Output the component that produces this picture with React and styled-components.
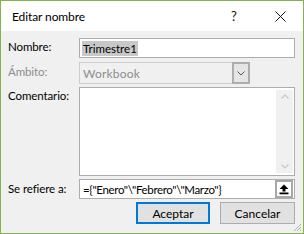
import React from "react";
import styled, { createGlobalStyle } from "styled-components";

const Global = createGlobalStyle`
  html, body { margin: 0; padding: 0; background: #fff; }
  body { font-family: "Lato", "Segoe UI", sans-serif; font-size: 11.5px; color: #000; }
`;

const Window = styled.div`
  box-sizing: border-box;
  width: 304px;
  height: 234px;
  border: 1px solid #7fb54a;
  background: #f0f0f0;
  display: flex;
  flex-direction: column;
  position: relative;
  overflow: hidden;
`;

const TitleBar = styled.div`
  height: 30px;
  background: #fff;
  display: flex;
  align-items: center;
  padding-left: 11px;
  flex-shrink: 0;
`;

const Title = styled.div`
  flex: 1;
  font-size: 12px;
  letter-spacing: -0.1px;
`;

const TitleButton = styled.div`
  width: 46px;
  height: 30px;
  display: flex;
  align-items: center;
  justify-content: center;
  font-size: 13px;
  color: #111;
`;

const Body = styled.div`
  flex: 1;
  display: grid;
  grid-template-columns: 71px 216px;
  grid-template-rows: 21px 22px 89px 20px 22px;
  row-gap: 3px;
  padding: 7px 0 0 7px;
  align-items: start;
`;

const Label = styled.div`
  font-size: 11.5px;
  line-height: 16px;
  letter-spacing: -0.1px;
  padding-top: ${(p) => p.$top || 1}px;
  color: ${(p) => (p.$disabled ? "#8d8d8d" : "#000")};
`;

const TextBox = styled.div`
  box-sizing: border-box;
  height: 20px;
  border: 1px solid #adadad;
  background: #fff;
  display: flex;
  align-items: center;
  padding: 0 2px;
  font-size: 11.5px;
`;

const Selected = styled.span`
  background: #c8c8c8;
  line-height: 15px;
  padding: 0 1px;
`;

const Combo = styled.div`
  box-sizing: border-box;
  width: 171px;
  height: 22px;
  border: 1px solid #cccccc;
  background: #f0f0f0;
  display: flex;
  align-items: stretch;
`;

const ComboText = styled.div`
  flex: 1;
  display: flex;
  align-items: center;
  padding-left: 3px;
  color: #8d8d8d;
  font-size: 12px;
  letter-spacing: 0.2px;
`;

const ComboButton = styled.div`
  box-sizing: border-box;
  width: 18px;
  margin: -1px -1px -1px 0;
  border: 2px solid #adadad;
  background: #e5e5e5;
  display: flex;
  align-items: center;
  justify-content: center;
`;

const TextArea = styled.div`
  box-sizing: border-box;
  height: 89px;
  border: 1px solid #adadad;
  background: #fff;
  display: flex;
  justify-content: flex-end;
  padding: 2px 1px 2px 0;
`;

const ScrollBar = styled.div`
  width: 17px;
  background: #f0f0f0;
  display: flex;
  flex-direction: column;
  justify-content: space-between;
  align-items: center;
  padding: 4px 0;
`;

const RefBox = styled(TextBox)`
  padding: 0 1px 0 3px;
  font-size: 11.5px;
  letter-spacing: -0.35px;
`;

const RefText = styled.div`
  flex: 1;
  white-space: nowrap;
`;

const PickButton = styled.div`
  box-sizing: border-box;
  width: 18px;
  height: 18px;
  border: 2px solid #a8a8a8;
  background: #fff;
  display: flex;
  align-items: center;
  justify-content: center;
`;

const Buttons = styled.div`
  grid-column: 2;
  display: flex;
  justify-content: flex-end;
  gap: 10px;
`;

const Button = styled.div`
  box-sizing: border-box;
  width: ${(p) => p.$w || 74}px;
  height: 22px;
  background: #e1e1e1;
  border: ${(p) => (p.$default ? "2px solid #0078d7" : "1px solid #adadad")};
  display: flex;
  align-items: center;
  justify-content: center;
  font-size: 12px;
`;

const Grip = styled.svg`
  position: absolute;
  right: 1px;
  bottom: 1px;
`;

export default function App() {
  return (
    <>
      <Global />
      <Window>
        <TitleBar>
          <Title>Editar nombre</Title>
          <TitleButton>?</TitleButton>
          <TitleButton>
            <svg width="11" height="11" viewBox="0 0 11 11">
              <path d="M0.5 0.5 L10.5 10.5 M10.5 0.5 L0.5 10.5" stroke="#111" strokeWidth="1" />
            </svg>
          </TitleButton>
        </TitleBar>
        <Body>
          <Label>Nombre:</Label>
          <TextBox>
            <Selected>Trimestre1</Selected>
          </TextBox>

          <Label $disabled $top={2}>Ámbito:</Label>
          <Combo>
            <ComboText>Workbook</ComboText>
            <ComboButton>
              <svg width="8" height="5" viewBox="0 0 8 5">
                <path d="M0.5 0.5 L4 4 L7.5 0.5" stroke="#555" fill="none" strokeWidth="1" />
              </svg>
            </ComboButton>
          </Combo>

          <Label>Comentario:</Label>
          <TextArea>
            <ScrollBar>
              <svg width="8" height="5" viewBox="0 0 8 5">
                <path d="M0.5 4.5 L4 1 L7.5 4.5" stroke="#c8c8c8" fill="none" strokeWidth="1.2" />
              </svg>
              <svg width="8" height="5" viewBox="0 0 8 5">
                <path d="M0.5 0.5 L4 4 L7.5 0.5" stroke="#c8c8c8" fill="none" strokeWidth="1.2" />
              </svg>
            </ScrollBar>
          </TextArea>

          <Label $top={2}>Se refiere a:</Label>
          <RefBox>
            <RefText>={"{"}"Enero"\"Febrero"\"Marzo"{"}"}</RefText>
            <PickButton>
              <svg width="10" height="11" viewBox="0 0 10 11">
                <path d="M5 0.5 L9.5 5 L6.5 5 L6.5 7.5 L3.5 7.5 L3.5 5 L0.5 5 Z" fill="#000" />
                <rect x="0.5" y="8.5" width="9" height="1.8" fill="#000" />
              </svg>
            </PickButton>
          </RefBox>

          <Buttons>
            <Button $default $w={74}>Aceptar</Button>
            <Button $w={75}>Cancelar</Button>
          </Buttons>
        </Body>
        <Grip width="10" height="10" viewBox="0 0 10 10">
          <path d="M9 2 L2 9 M9 5 L5 9 M9 8 L8 9" stroke="#b0b0b0" strokeWidth="1" />
        </Grip>
      </Window>
    </>
  );
}
